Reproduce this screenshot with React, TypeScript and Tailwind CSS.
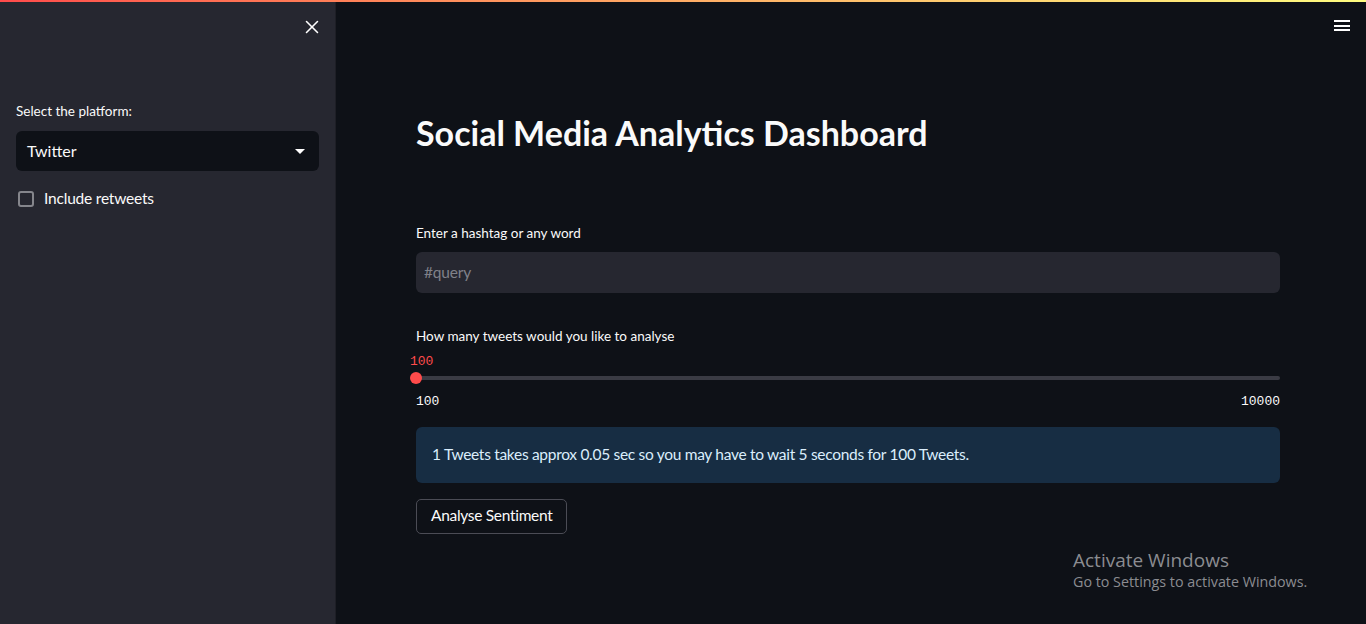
import { X } from "lucide-react"

const sans = "font-['Lato','Liberation_Sans',sans-serif]"
const mono = "font-['Liberation_Mono','DejaVu_Sans_Mono',monospace]"

const Sidebar = () => {
	return (
		<aside className="w-[336px] shrink-0 bg-[#262730] border-r border-[#1e1f26] px-4">
			<div className="flex justify-end pt-[16px] -mr-[4px]">
				<X className="size-[22px] text-white" strokeWidth={1.7} />
			</div>
			<div className="mt-[63px] text-[13.5px] text-[#fafafa]">Select the platform:</div>
			<div className="mt-[10px] h-[40px] rounded-md bg-[#0e1117] flex items-center justify-between pl-[11px] pr-[14px]">
				<span className="text-[16px] text-[#fafafa]">Twitter</span>
				<span className="w-0 h-0 border-l-[5px] border-r-[5px] border-t-[5px] border-l-transparent border-r-transparent border-t-white" />
			</div>
			<label className="mt-[16px] flex items-center gap-[10px] pl-[2px]">
				<span className="size-[16px] rounded-[3px] border-2 border-[#85868c]" />
				<span className="text-[15.5px] tracking-[-0.2px] text-[#fafafa]">Include retweets</span>
			</label>
		</aside>
	)
}

const Slider = () => {
	return (
		<div>
			<div className="text-[13.5px] text-[#fafafa]">How many tweets would you like to analyse</div>
			<div className={`${mono} mt-[7px] -ml-[6px] text-[13px] leading-[16px] text-[#ff4b4b]`}>100</div>
			<div className="relative mt-[2px] h-[12px] flex items-center">
				<div className="h-[4px] w-full rounded-full bg-[#3a3b44]" />
				<div className="absolute left-[-6px] top-0 size-[12px] rounded-full bg-[#ff4b4b]" />
			</div>
			<div className={`${mono} mt-[10px] flex justify-between text-[13px] leading-[16px] text-[#fafafa]`}>
				<span>100</span>
				<span>10000</span>
			</div>
		</div>
	)
}

export default function App() {
	return (
		<div className={`${sans} relative h-[624px] w-[1366px] overflow-hidden bg-[#0e1117]`}>
			<div className="absolute left-0 right-0 top-0 z-10 h-[2px] bg-gradient-to-r from-[#ff4b4b] to-[#fffd80]" />
			<div className="flex h-full">
				<Sidebar />
				<main className="relative flex-1">
					<div className="absolute right-[16px] top-[20px] flex flex-col gap-[2.5px]">
						<span className="block h-[2px] w-[16px] bg-white" />
						<span className="block h-[2px] w-[16px] bg-white" />
						<span className="block h-[2px] w-[16px] bg-white" />
					</div>
					<div className="ml-[80px] w-[864px] pt-[110px]">
						<h1 className="text-[34px] leading-[46px] font-bold text-[#fafafa]">
							Social Media Analytics Dashboard
						</h1>
						<div className="mt-[67px] text-[13.5px] text-[#fafafa]">Enter a hashtag or any word</div>
						<div className="mt-[9px] h-[41px] rounded-md bg-[#262730] flex items-center px-[8px]">
							<span className="text-[15.5px] tracking-[-0.2px] text-[#808189]">#query</span>
						</div>
						<div className="mt-[33px]">
							<Slider />
						</div>
						<div className="mt-[17px] h-[56px] rounded-md bg-[#172d43] flex items-center px-[16px] text-[15.5px] tracking-[-0.3px] text-[#dbeefc]">
							1 Tweets takes approx 0.05 sec so you may have to wait 5 seconds for 100 Tweets.
						</div>
						<button className="mt-[16px] h-[35px] rounded-[5px] border border-[#4b4c55] px-[14px] text-[15.5px] tracking-[-0.3px] text-[#fafafa]">
							Analyse Sentiment
						</button>
					</div>
					<div className="absolute left-[737px] top-[548px] text-[#8b8c91] font-['Open_Sans',sans-serif]">
						<div className="text-[19px] leading-[24px]">Activate Windows</div>
						<div className="text-[14.3px] leading-[20px]">Go to Settings to activate Windows.</div>
					</div>
				</main>
			</div>
		</div>
	)
}
